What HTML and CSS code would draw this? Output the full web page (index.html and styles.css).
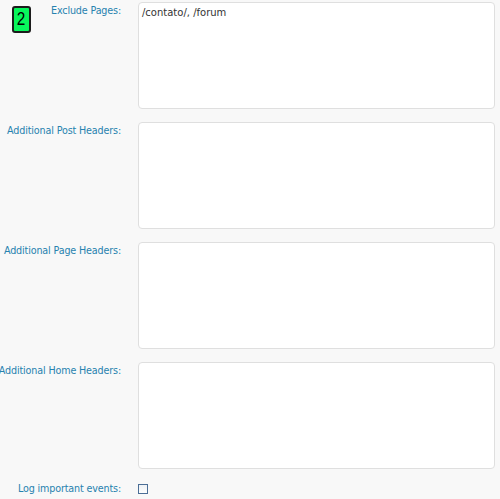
FILE: index.html
```html
<!DOCTYPE html>
<html>
<head>
<meta charset="utf-8">
<link rel="stylesheet" href="styles.css">
</head>
<body>
<div class="badge"><span class="badge-num">2</span></div>
<div class="form">
  <div class="row">
    <label class="label"><span>Exclude Pages:</span></label>
    <textarea class="field">/contato/, /forum</textarea>
  </div>
  <div class="row">
    <label class="label"><span>Additional Post Headers:</span></label>
    <textarea class="field"></textarea>
  </div>
  <div class="row">
    <label class="label"><span>Additional Page Headers:</span></label>
    <textarea class="field"></textarea>
  </div>
  <div class="row">
    <label class="label"><span>Additional Home Headers:</span></label>
    <textarea class="field"></textarea>
  </div>
  <div class="row check-row">
    <label class="label"><span>Log important events:</span></label>
    <input type="checkbox" class="check">
  </div>
</div>
</body>
</html>
```
FILE: styles.css
```css
html, body {
  margin: 0;
  padding: 0;
  background: #f8f8f8;
  font-family: "DejaVu Sans", Verdana, sans-serif;
  font-size: 10px;
}
.badge {
  position: absolute;
  left: 12px;
  top: 6px;
  box-sizing: border-box;
  width: 19px;
  height: 27px;
  border: 2px solid #1c1c1c;
  border-radius: 3px;
  background: #08f65c;
  color: #000;
  text-align: center;
  line-height: 23px;
}
.badge-num {
  display: inline-block;
  font-family: "Liberation Sans Narrow", "Liberation Sans", sans-serif;
  font-size: 18px;
  transform: scaleX(0.85);
}
.form {
  padding-top: 2px;
}
.row {
  display: flex;
  align-items: flex-start;
  margin-bottom: 13px;
}
.label {
  display: flex;
  justify-content: flex-end;
  box-sizing: border-box;
  width: 138px;
  padding-right: 17px;
  padding-top: 3px;
  color: #2782af;
  font-size: 9.6px;
  line-height: 12px;
  letter-spacing: -0.15px;
  white-space: nowrap;
  flex-shrink: 0;
}
.field {
  box-sizing: border-box;
  width: 357px;
  height: 107px;
  margin: 0;
  padding: 3px 3px;
  border: 1px solid #dfdfdf;
  border-radius: 4px;
  background: #fff;
  font-family: "DejaVu Sans", Verdana, sans-serif;
  font-size: 10px;
  line-height: 13px;
  color: #333;
  resize: none;
  outline: none;
}
.check-row .label {
  padding-top: 1px;
}
.check {
  appearance: none;
  -webkit-appearance: none;
  box-sizing: border-box;
  width: 10px;
  height: 10px;
  margin: 2px 0 0 0;
  border: 1px solid #4b6e96;
  background: linear-gradient(#eef1f5, #fdfdfd);
}
```
